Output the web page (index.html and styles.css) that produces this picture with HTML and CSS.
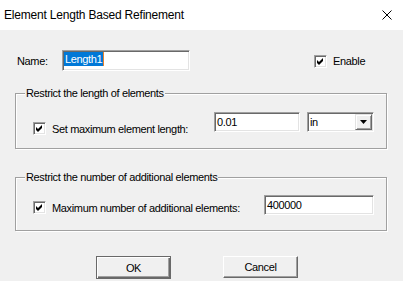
FILE: index.html
```html
<!DOCTYPE html>
<html lang="en">
<head>
  <meta charset="UTF-8" />
  <title>Element Length Based Refinement</title>
  <link rel="stylesheet" href="styles.css">
</head>
<body>
  <div class="titlebar">
    <span class="title">Element Length Based Refinement</span>
    <svg class="close" width="10" height="10" viewBox="0 0 10 10">
      <path d="M0.5 0.5 L9.5 9.5 M9.5 0.5 L0.5 9.5" stroke="#000" stroke-width="1" fill="none"/>
    </svg>
  </div>

  <div class="dialog">
    <div class="name-row">
      <span class="name-label">Name:</span>
      <div class="field name-field"><span class="selected">Length1</span><span class="caret"></span></div>
      <label class="check enable">
        <span class="box"><svg width="7" height="7" viewBox="0 0 7 7"><path d="M0 2 L2 4 L6 0 L6 3 L2 7 L0 5 Z" fill="#000"/></svg></span>
        <span>Enable</span>
      </label>
    </div>

    <div class="group group-length">
      <span class="group-title">Restrict the length of elements</span>
      <div class="row">
        <label class="check wide">
          <span class="box"><svg width="7" height="7" viewBox="0 0 7 7"><path d="M0 2 L2 4 L6 0 L6 3 L2 7 L0 5 Z" fill="#000"/></svg></span>
          <span>Set maximum element length:</span>
        </label>
        <div class="field length-field">0.01</div>
        <div class="field combo">
          <span class="combo-text">in</span>
          <span class="drop"><svg width="7" height="4" viewBox="0 0 7 4"><path d="M0 0 H7 L3.5 4 Z" fill="#000"/></svg></span>
        </div>
      </div>
    </div>

    <div class="group group-count">
      <span class="group-title">Restrict the number of additional elements</span>
      <div class="row">
        <label class="check wider">
          <span class="box"><svg width="7" height="7" viewBox="0 0 7 7"><path d="M0 2 L2 4 L6 0 L6 3 L2 7 L0 5 Z" fill="#000"/></svg></span>
          <span>Maximum number of additional elements:</span>
        </label>
        <div class="field count-field">400000</div>
      </div>
    </div>

    <div class="buttons">
      <button class="btn default">OK</button>
      <button class="btn">Cancel</button>
    </div>
  </div>
</body>
</html>
```

FILE: styles.css
```css
body {
  margin: 0;
  background-color: #f0f0f0;
  font-family: "Liberation Sans", Arial, sans-serif;
  font-size: 11px;
  letter-spacing: -0.35px;
  color: #000;
  overflow: hidden;
}
.titlebar {
  height: 30px;
  background-color: #fff;
  display: flex;
  align-items: center;
  justify-content: space-between;
}
.title {
  padding-left: 4px;
  font-size: 12px;
  letter-spacing: -0.2px;
}
.close {
  margin-right: 11px;
  margin-top: -1px;
}
.name-row {
  display: flex;
  align-items: center;
  height: 21px;
  margin-top: 20px;
  padding-left: 17px;
}
.name-label {
  width: 45px;
}
.field {
  box-sizing: border-box;
  height: 20px;
  background-color: #fff;
  border: 1px solid;
  border-color: #a0a0a0 #fff #fff #a0a0a0;
  box-shadow: inset 1px 1px 0 #696969, inset -1px -1px 0 #e3e3e3;
  padding: 2px 0 0 2px;
  line-height: 14px;
}
.name-field {
  width: 128px;
  height: 21px;
  display: flex;
  align-items: flex-start;
  padding-left: 1px;
  padding-top: 1px;
}
.selected {
  background-color: #0078d7;
  color: #fff;
  padding: 0 1px;
  line-height: 14px;
}
.caret {
  width: 1px;
  height: 14px;
  background-color: #e8822c;
}
.check {
  display: flex;
  align-items: center;
  gap: 6px;
}
.box {
  box-sizing: border-box;
  width: 13px;
  height: 13px;
  background-color: #fff;
  border: 1px solid;
  border-color: #a0a0a0 #fff #fff #a0a0a0;
  box-shadow: inset 1px 1px 0 #696969, inset -1px -1px 0 #e3e3e3;
  display: flex;
  align-items: center;
  justify-content: center;
}
.box svg {
  display: block;
}
.enable {
  margin-left: 124px;
  margin-top: 1px;
}
.group {
  margin-left: 15px;
  width: 370px;
  border: 1px solid #a0a0a0;
  box-shadow: 1px 1px 0 #fff, inset 1px 1px 0 #fff;
}
.group-title {
  display: inline-block;
  margin: -7px 0 0 9px;
  padding: 0 1px;
  line-height: 13px;
  background-color: #f0f0f0;
  vertical-align: top;
}
.group-length {
  margin-top: 22px;
  padding-bottom: 16px;
}
.group-length .row {
  margin-top: 6px;
}
.group-count {
  margin-top: 28px;
  padding-bottom: 15px;
}
.group-count .row {
  margin-top: 5px;
}
.row {
  display: flex;
  align-items: flex-start;
  height: 20px;
  padding-left: 17px;
}
.wide {
  width: 181px;
  margin-top: 10px;
}
.wider {
  width: 231px;
  margin-top: 6px;
}
.length-field {
  width: 86px;
}
.combo {
  width: 67px;
  margin-left: 7px;
  display: flex;
  justify-content: space-between;
  padding: 1px 1px 1px 2px;
}
.combo-text {
  padding-top: 1px;
}
.drop {
  box-sizing: border-box;
  width: 17px;
  height: 16px;
  background-color: #f0f0f0;
  border: 1px solid;
  border-color: #e3e3e3 #696969 #696969 #e3e3e3;
  box-shadow: inset 1px 1px 0 #fff, inset -1px -1px 0 #a0a0a0;
  display: flex;
  align-items: center;
  justify-content: center;
}
.count-field {
  width: 110px;
}
.buttons {
  display: flex;
  align-items: flex-start;
  gap: 52px;
  margin-top: 25px;
  padding-left: 96px;
}
.btn {
  box-sizing: border-box;
  width: 75px;
  height: 22px;
  padding: 0;
  font-family: "Liberation Sans", Arial, sans-serif;
  font-size: 11px;
  letter-spacing: -0.35px;
  color: #000;
  background-color: #f0f0f0;
  border: 1px solid;
  border-color: #fff #696969 #696969 #fff;
  box-shadow: inset -1px -1px 0 #a0a0a0;
}
.btn.default {
  height: 23px;
  border-color: #696969;
  box-shadow: inset 1px 1px 0 #fff, inset -1px -1px 0 #696969, inset -2px -2px 0 #a0a0a0;
}
```
